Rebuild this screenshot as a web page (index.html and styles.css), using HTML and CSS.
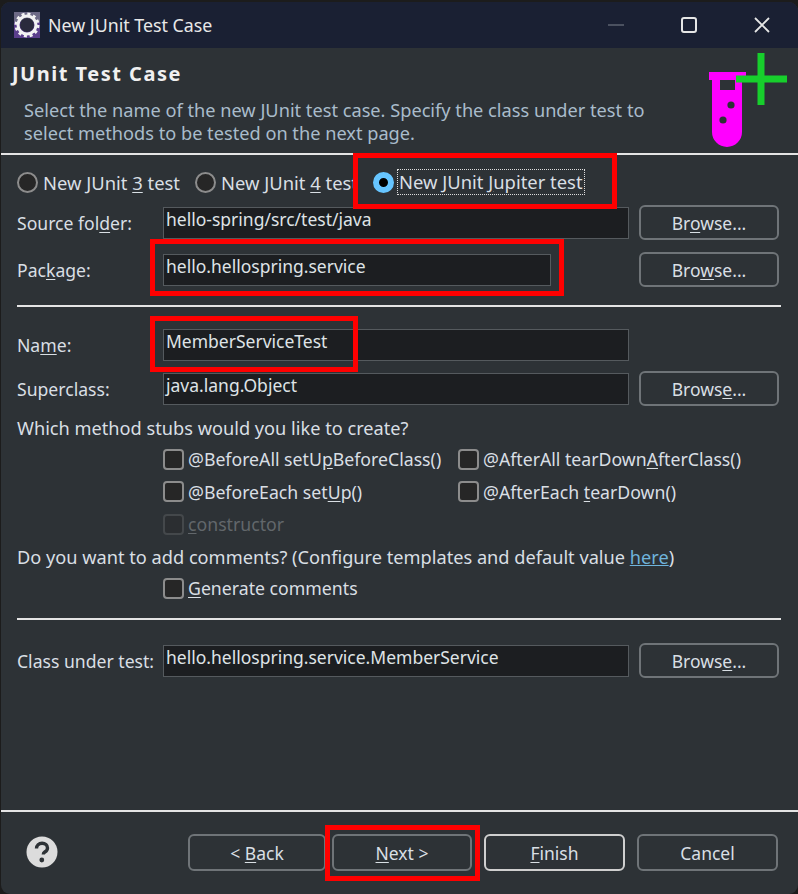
FILE: index.html
```html
<!DOCTYPE html>
<html lang="en">
<head>
    <meta charset="UTF-8">
    <title>New JUnit Test Case</title>
    <link rel="stylesheet" href="styles.css">
</head>
<body>
    <div class="dialog">
        <header class="titlebar">
            <svg class="app-icon" width="26" height="26" viewBox="0 0 26 26">
                <rect width="26" height="26" fill="#5b3f8c"/>
                <rect width="26" height="10" fill="#6d6a86"/>
                <circle cx="13" cy="13" r="9" fill="none" stroke="#f2f2f2" stroke-width="3"/>
                <circle cx="13" cy="13" r="11" fill="none" stroke="#f2f2f2" stroke-width="3" stroke-dasharray="3 2.76"/>
                <circle cx="13" cy="13" r="7" fill="#2a2a3c"/>
            </svg>
            <span class="title">New JUnit Test Case</span>
            <div class="win-buttons">
                <svg width="18" height="18" viewBox="0 0 18 18"><path d="M1 9h16" stroke="#4b5160" stroke-width="2"/></svg>
                <svg width="18" height="18" viewBox="0 0 18 18"><rect x="2" y="2" width="14" height="14" rx="2" fill="none" stroke="#e6e6e6" stroke-width="2"/></svg>
                <svg width="18" height="18" viewBox="0 0 18 18"><path d="M2 2l14 14M16 2L2 16" stroke="#e6e6e6" stroke-width="1.8"/></svg>
            </div>
        </header>

        <div class="banner">
            <h1>JUnit Test Case</h1>
            <p>Select the name of the new JUnit test case. Specify the class under test to<br>select methods to be tested on the next page.</p>
            <svg class="banner-icon" width="80" height="96" viewBox="0 0 80 96">
                <path d="M1 19h37v8h-4v52a15 15 0 0 1-30 0V27H1z" fill="#ff00ff"/>
                <rect x="12" y="27" width="15" height="10" fill="#2d3236"/>
                <circle cx="23" cy="52" r="3.6" fill="#2d3236"/>
                <circle cx="15" cy="67" r="3.6" fill="#2d3236"/>
                <path d="M53 0v52M28 26h51" stroke="#17cf2c" stroke-width="7"/>
            </svg>
        </div>
        <div class="sep full"></div>

        <div class="radios">
            <label class="radio"><span class="radio-dot"></span><span>New JUnit <u>3</u> test</span></label>
            <label class="radio"><span class="radio-dot"></span><span>New JUnit <u>4</u> test</span></label>
            <label class="radio selected"><span class="radio-dot"></span><span class="focus">New JUnit <u>J</u>upiter test</span></label>
        </div>

        <div class="fields">
            <label>Source fol<u>d</u>er:</label>
            <div class="field">hello-spring/src/test/java</div>
            <button>Br<u>o</u>wse...</button>
            <label>Pac<u>k</u>age:</label>
            <div class="field short">hello.hellospring.service</div>
            <button>Bro<u>w</u>se...</button>
        </div>
        <div class="sep"></div>

        <div class="fields second">
            <label>Na<u>m</u>e:</label>
            <div class="field">MemberServiceTest</div>
            <span></span>
            <label>Superclass:</label>
            <div class="field">java.lang.Object</div>
            <button>Brows<u>e</u>...</button>
        </div>

        <div class="line">Which method stubs would you like to create?</div>
        <div class="stubs">
            <label class="check"><span class="box"></span><span>@BeforeAll setU<u>p</u>BeforeClass()</span></label>
            <label class="check"><span class="box"></span><span>@AfterAll tearDown<u>A</u>fterClass()</span></label>
            <label class="check"><span class="box"></span><span>@BeforeEach set<u>U</u>p()</span></label>
            <label class="check"><span class="box"></span><span>@AfterEach <u>t</u>earDown()</span></label>
            <label class="check disabled"><span class="box"></span><span><u>c</u>onstructor</span></label>
        </div>
        <div class="line comments">Do you want to add comments? (Configure templates and default value <a href="#">here</a>)</div>
        <div class="stubs single">
            <label class="check"><span class="box"></span><span><u>G</u>enerate comments</span></label>
        </div>
        <div class="sep lower"></div>

        <div class="fields third">
            <label>Class under test:</label>
            <div class="field">hello.hellospring.service.MemberService</div>
            <button>Brows<u>e</u>...</button>
        </div>

        <div class="spacer"></div>
        <div class="sep full"></div>

        <footer class="actions">
            <svg class="help" width="32" height="32" viewBox="0 0 32 32">
                <circle cx="16" cy="16" r="15.5" fill="#dcdcdc"/>
                <path d="M10.5 12.5c0-3.2 2.4-5.2 5.6-5.2 3.1 0 5.4 1.8 5.4 4.6 0 2-1.1 3.1-2.7 4.1-1.2.8-1.5 1.2-1.5 2.5" fill="none" stroke="#2d3236" stroke-width="3.4"/>
                <circle cx="15.8" cy="24" r="2.4" fill="#2d3236"/>
            </svg>
            <button class="back">&lt; <u>B</u>ack</button>
            <button class="next"><u>N</u>ext &gt;</button>
            <button class="finish"><u>F</u>inish</button>
            <button class="cancel">Cancel</button>
        </footer>

        <div class="mark mark-jupiter"></div>
        <div class="mark mark-package"></div>
        <div class="mark mark-name"></div>
        <div class="mark mark-next"></div>
    </div>
</body>
</html>
```

FILE: styles.css
```css
html, body {
    margin: 0;
    height: 100%;
    background-color: #1c1c1c;
}
body {
    font-family: "Noto Sans", Arial, sans-serif;
    font-size: 18.2px;
    color: #d9dfe4;
    overflow: hidden;
}
u {
    text-underline-offset: 2px;
}
.dialog {
    position: relative;
    box-sizing: border-box;
    width: 797px;
    height: 892px;
    margin: 2px 0 0 1px;
    display: flex;
    flex-direction: column;
    background-color: #2d3236;
    border-radius: 9px;
    overflow: hidden;
}
.titlebar {
    display: flex;
    align-items: center;
    height: 46px;
    flex: none;
    padding-left: 13px;
    background-color: #1a2033;
    color: #e8e8e8;
}
.app-icon {
    margin-right: 8px;
}
.title {
    font-size: 17.8px;
}
.win-buttons {
    margin-left: auto;
    display: flex;
    gap: 55px;
    padding-right: 27px;
    align-items: center;
    height: 100%;
}
.banner {
    position: relative;
    height: 105px;
    flex: none;
}
.banner h1 {
    margin: 0;
    padding: 13px 0 0 11px;
    font-size: 20px;
    line-height: 26px;
    font-weight: 700;
    color: #f0f0f0;
    letter-spacing: 1.5px;
}
.banner p {
    margin: 12px 0 0 23px;
    line-height: 23px;
    color: #a9bccb;
}
.banner-icon {
    position: absolute;
    left: 707px;
    top: 5px;
}
.sep {
    height: 2px;
    flex: none;
    margin: 0 17px 0 16px;
    background-color: #e4e4e4;
}
.sep.full {
    margin: 0;
}
.radios {
    display: flex;
    align-items: center;
    height: 24px;
    margin: 15px 0 0 16px;
    font-size: 18.4px;
}
.radio {
    display: flex;
    align-items: center;
    gap: 5px;
    margin-right: 15px;
    white-space: nowrap;
}
.radio.selected {
    gap: 4px;
}
.radio-dot {
    box-sizing: border-box;
    width: 21px;
    height: 21px;
    border: 2px solid #8c8c8c;
    border-radius: 50%;
    background-color: #262626;
}
.radio.selected .radio-dot {
    border: 6px solid #66c5ff;
    background-color: #000;
}
.focus {
    outline: 1px dotted #ddd;
    padding: 0 1px;
    line-height: 24px;
}
.fields {
    display: grid;
    grid-template-columns: 146px 466px 150px;
    grid-auto-rows: 35px;
    row-gap: 12px;
    margin: 11px 0 0 16px;
    align-items: center;
    font-size: 17.6px;
}
.fields label {
    grid-column: 1;
}
.fields button {
    margin-left: 10px;
    width: 140px;
}
.field {
    box-sizing: border-box;
    height: 32px;
    line-height: 23px;
    padding: 0 2px;
    border: 1px solid #555a5e;
    background-color: #1c1e21;
    color: #dfe3e6;
    font-size: 17.5px;
}
.field.short {
    width: 388px;
}
.sep + .fields {
    margin-top: 20px;
}
.fields.second {
    row-gap: 9px;
}
.fields.third {
    margin-top: 23px;
}
.fields + .sep {
    margin-top: 18px;
}
button {
    box-sizing: border-box;
    height: 35px;
    font: inherit;
    font-size: 17.5px;
    color: #d9dfe4;
    background-color: transparent;
    border: 2px solid #6f7478;
    border-radius: 6px;
    padding: 0;
}
.line {
    height: 24px;
    line-height: 24px;
    margin: 10px 0 0 16px;
}
.line a {
    color: #6fb4dc;
}
.stubs {
    display: grid;
    grid-template-columns: 295px auto;
    row-gap: 8.5px;
    margin: 7px 0 0 162px;
    font-size: 17.7px;
}
.check {
    display: flex;
    align-items: center;
    gap: 4px;
    height: 24px;
    white-space: nowrap;
}
.box {
    box-sizing: border-box;
    width: 21px;
    height: 21px;
    border: 2px solid #8c8c8c;
    border-radius: 4px;
    background-color: #262626;
}
.check.disabled {
    color: #62676b;
}
.check.disabled .box {
    border-color: #44484b;
    background-color: #2b2e31;
}
.comments {
    margin-top: 9px;
}
.stubs.single {
    margin-top: 7px;
}
.sep.lower {
    margin-top: 18px;
}
.spacer {
    flex: 1;
}
.actions {
    position: relative;
    box-sizing: border-box;
    height: 82px;
    flex: none;
    display: flex;
    align-items: flex-start;
    padding: 22px 0 0 187px;
}
.actions button {
    height: 37px;
}
.help {
    position: absolute;
    left: 25px;
    top: 24px;
}
.back { width: 138px; }
.next { width: 140px; margin-left: 6px; }
.finish { width: 141px; margin-left: 12px; border-color: #cfcfcf; }
.cancel { width: 141px; margin-left: 12px; }

/* red annotation boxes drawn over the screenshot */
.mark {
    position: absolute;
    box-sizing: border-box;
    border: 5px solid #ff0000;
}
.mark-jupiter { left: 352px; top: 151px; width: 264px; height: 56px; }
.mark-package { left: 149px; top: 237px; width: 414px; height: 57px; }
.mark-name { left: 149px; top: 314px; width: 208px; height: 56px; }
.mark-next { left: 324px; top: 823px; width: 155px; height: 56px; }
```
